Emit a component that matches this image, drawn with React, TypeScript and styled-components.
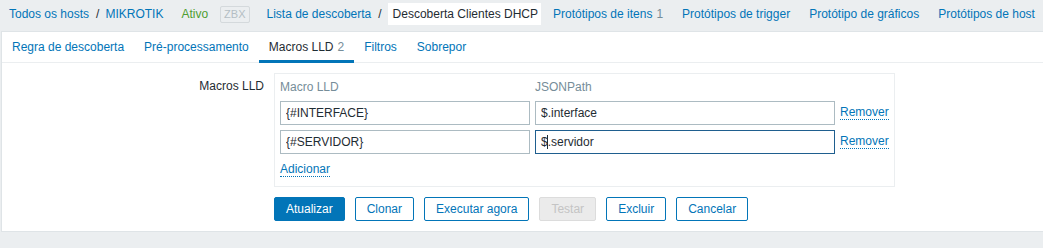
import React from 'react';
import styled, { createGlobalStyle } from 'styled-components';

const colors = {
  link: '#0275b8',
  text: '#1f2c33',
  muted: '#768d99',
  pageBg: '#ebeef0',
  border: '#dfe4e7',
  light: '#ebeef0',
  inputBorder: '#acbbc2',
  focus: '#1f5f8f',
  status: '#4f9e32',
};

const GlobalStyle = createGlobalStyle`
  html, body {
    margin: 0;
    padding: 0;
    background: ${colors.pageBg};
    overflow: hidden;
  }
  body {
    font-family: "Liberation Sans", Arial, sans-serif;
    font-size: 12px;
    color: ${colors.text};
  }
`;

const navLinks = [
  { label: 'Protótipos de itens', count: 1 },
  { label: 'Protótipos de trigger' },
  { label: 'Protótipo de gráficos' },
  { label: 'Protótipos de host' },
];

const tabs = [
  { label: 'Regra de descoberta' },
  { label: 'Pré-processamento' },
  { label: 'Macros LLD', count: 2, active: true },
  { label: 'Filtros' },
  { label: 'Sobrepor' },
];

const macros = [
  { macro: '{#INTERFACE}', path: '$.interface' },
  { macro: '{#SERVIDOR}', path: '$.servidor', focused: true },
];

const buttons = [
  { label: 'Atualizar', variant: 'primary' as const },
  { label: 'Clonar' },
  { label: 'Executar agora' },
  { label: 'Testar', variant: 'disabled' as const },
  { label: 'Excluir' },
  { label: 'Cancelar' },
];

export default function App() {
  return (
    <>
      <GlobalStyle />
      <Nav>
        <Crumbs $after={18}>
          <NavLink>Todos os hosts</NavLink>
          <Separator>/</Separator>
          <NavLink>MIKROTIK</NavLink>
        </Crumbs>
        <StatusGroup>
          <StatusText>Ativo</StatusText>
          <StatusBadge>ZBX</StatusBadge>
        </StatusGroup>
        <Crumbs $after={12}>
          <NavLink>Lista de descoberta</NavLink>
          <Separator>/</Separator>
          <SelectedCrumb>Descoberta Clientes DHCP</SelectedCrumb>
        </Crumbs>
        <NavLinks>
          {navLinks.map(l => (
            <NavLink key={l.label}>
              {l.label}
              {l.count !== undefined && <Count>{l.count}</Count>}
            </NavLink>
          ))}
        </NavLinks>
      </Nav>

      <Panel>
        <TabList>
          {tabs.map(t => (
            <Tab key={t.label} $active={!!t.active}>
              {t.label}
              {t.count !== undefined && <Count>{t.count}</Count>}
            </Tab>
          ))}
        </TabList>

        <Form>
          <FormLabel>Macros LLD</FormLabel>
          <FormValue>
            <MacroTable>
              <HeadCell>Macro LLD</HeadCell>
              <HeadCell>JSONPath</HeadCell>
              <span />
              {macros.map(m => (
                <React.Fragment key={m.macro}>
                  <TextInput value={m.macro} readOnly />
                  <InputWrap>
                    <TextInput value={m.path} readOnly $focused={!!m.focused} />
                    {m.focused && <Caret />}
                  </InputWrap>
                  <LinkCell>
                    <DottedLink>Remover</DottedLink>
                  </LinkCell>
                </React.Fragment>
              ))}
              <AddRow>
                <DottedLink>Adicionar</DottedLink>
              </AddRow>
            </MacroTable>

            <ButtonRow>
              {buttons.map(b => (
                <Button key={b.label} $variant={b.variant} disabled={b.variant === 'disabled'}>
                  {b.label}
                </Button>
              ))}
            </ButtonRow>
          </FormValue>
        </Form>
      </Panel>
    </>
  );
}

const Nav = styled.nav`
  display: flex;
  align-items: center;
  height: 22px;
  padding: 3px 0 6px 9px;
  white-space: nowrap;
`;

const Crumbs = styled.div<{ $after: number }>`
  display: flex;
  align-items: center;
  height: 22px;
  margin-right: ${p => p.$after}px;
`;

const NavLink = styled.span`
  color: ${colors.link};
  line-height: 14px;
  cursor: pointer;
`;

const Separator = styled.span`
  padding: 0 6px 0 7px;
  color: ${colors.text};
`;

const SelectedCrumb = styled.span`
  display: flex;
  align-items: center;
  height: 22px;
  padding: 0 3px 0 5px;
  background: #ffffff;
  color: ${colors.text};
`;

const StatusGroup = styled.div`
  display: flex;
  align-items: center;
  gap: 12px;
  margin-right: 17px;
`;

const StatusText = styled.span`
  color: ${colors.status};
`;

const StatusBadge = styled.span`
  display: inline-flex;
  align-items: center;
  height: 15px;
  padding: 0 3px;
  border: 1px solid #d4d9dc;
  border-radius: 2px;
  font-size: 11px;
  color: #b4bec4;
`;

const NavLinks = styled.div`
  display: flex;
  align-items: center;
  gap: 19px;
`;

const Count = styled.span`
  margin-left: 4px;
  color: ${colors.muted};
`;

const Panel = styled.main`
  margin-left: 1px;
  background: #ffffff;
  border: 1px solid ${colors.border};
  border-right: none;
`;

const TabList = styled.ul`
  display: flex;
  margin: 0;
  padding: 0;
  height: 30px;
  list-style: none;
  border-bottom: 1px solid ${colors.light};
`;

const Tab = styled.li<{ $active: boolean }>`
  box-sizing: border-box;
  height: 31px;
  margin-bottom: -1px;
  padding: 2px 10px 0;
  line-height: 26px;
  white-space: nowrap;
  border-bottom: 3px solid ${p => (p.$active ? colors.link : 'transparent')};
  color: ${p => (p.$active ? colors.text : colors.link)};
  cursor: pointer;
`;

const Form = styled.form`
  display: grid;
  grid-template-columns: 272px auto;
  padding: 10px 0 10px;
`;

const FormLabel = styled.label`
  padding: 6px 10px 0 0;
  text-align: right;
  line-height: 14px;
`;

const FormValue = styled.div`
  display: flex;
  flex-direction: column;
  align-items: flex-start;
`;

const MacroTable = styled.div`
  display: grid;
  grid-template-columns: 250px 300px auto;
  column-gap: 5px;
  row-gap: 5px;
  padding: 5px;
  border: 1px solid ${colors.light};
`;

const HeadCell = styled.div`
  height: 17px;
  line-height: 16px;
  color: ${colors.muted};
`;

const InputWrap = styled.div`
  position: relative;
`;

const TextInput = styled.input<{ $focused?: boolean }>`
  box-sizing: border-box;
  display: block;
  width: 100%;
  height: 24px;
  margin: 0;
  padding: 0 5px;
  border: 1px solid ${p => (p.$focused ? colors.focus : colors.inputBorder)};
  border-radius: 0;
  outline: none;
  background: #ffffff;
  font-family: "Liberation Sans", Arial, sans-serif;
  font-size: 12px;
  color: ${colors.text};
`;

const Caret = styled.span`
  position: absolute;
  left: 12px;
  top: 5px;
  width: 1px;
  height: 14px;
  background: ${colors.text};
`;

const LinkCell = styled.div`
  display: flex;
  align-items: center;
`;

const DottedLink = styled.span`
  color: ${colors.link};
  line-height: 13px;
  border-bottom: 1px dotted ${colors.link};
  cursor: pointer;
`;

const AddRow = styled.div`
  grid-column: 1 / -1;
  display: flex;
  align-items: center;
  height: 22px;
`;

const ButtonRow = styled.div`
  display: flex;
  gap: 10px;
  margin-top: 10px;
`;

const Button = styled.button<{ $variant?: 'primary' | 'disabled' }>`
  box-sizing: border-box;
  height: 24px;
  margin: 0;
  padding: 0 11px;
  border-radius: 2px;
  font-family: "Liberation Sans", Arial, sans-serif;
  font-size: 12px;
  cursor: pointer;
  border: 1px solid
    ${p => (p.$variant === 'disabled' ? '#dcdcdc' : colors.link)};
  background: ${p =>
    p.$variant === 'primary' ? colors.link : p.$variant === 'disabled' ? '#ebebeb' : '#ffffff'};
  color: ${p =>
    p.$variant === 'primary' ? '#ffffff' : p.$variant === 'disabled' ? '#c4c4c4' : colors.link};
`;
